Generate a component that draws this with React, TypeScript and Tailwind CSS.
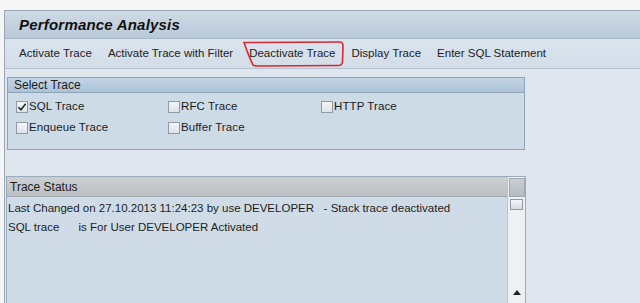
import { ReactNode } from 'react';

const font = { fontFamily: '"Liberation Sans", Arial, sans-serif' };

const CheckItem = ({ label, checked }: { label: string; checked?: boolean }) => (
  <div className="flex items-center h-[21px]">
    <div className="w-[12px] h-[12px] border border-[#8e9aa6] bg-gradient-to-b from-[#f4f6f8] to-[#dde3e9] flex items-center justify-center mr-[1px]">
      {checked && (
        <svg width="10" height="10" viewBox="0 0 10 10">
          <path d="M1.5 5.2 L4 7.8 L8.6 1.8" fill="none" stroke="#222" strokeWidth="1.5" />
        </svg>
      )}
    </div>
    <span className="text-[11.5px] text-[#1c1c1c] tracking-[0.1px]">{label}</span>
  </div>
);

const ToolItem = ({ children }: { children: ReactNode }) => (
  <span className="text-[11.5px] text-[#222] whitespace-nowrap">{children}</span>
);

export default function App() {
  return (
    <div className="w-[640px] h-[303px] overflow-hidden bg-[#f3f5f6] relative" style={font}>
      <div className="h-[10px] bg-[#f6f7f7]" />
      <div className="ml-[4px] border-l border-t border-[#9aa8b6] bg-[#dfe6ed] h-[293px]">
        {/* title */}
        <div className="h-[28px] bg-gradient-to-b from-[#cfdae5] via-[#c4d2df] to-[#b8c9d9] flex items-center pl-[14px] pt-[1px] border-b border-[#a9b9c9]">
          <span className="text-[15px] font-bold italic text-[#111] tracking-[0.2px]">Performance Analysis</span>
        </div>
        {/* toolbar */}
        <div className="h-[30px] bg-gradient-to-b from-[#dbe4ed] to-[#d2dde8] flex items-center pl-[14px] gap-[16px] border-b border-[#b4c2cf]">
          <ToolItem>Activate Trace</ToolItem>
          <ToolItem>Activate Trace with Filter</ToolItem>
          <ToolItem>Deactivate Trace</ToolItem>
          <ToolItem>Display Trace</ToolItem>
          <ToolItem>Enter SQL Statement</ToolItem>
        </div>
        {/* select trace */}
        <div className="pt-[8px] pl-[2px]">
          <div className="w-[518px] h-[73px] border border-[#8fa3b6] bg-[#cddbe7]">
            <div className="h-[15px] bg-gradient-to-b from-[#c3d5e6] to-[#adc3d8] border-b border-[#8fa3b6] flex items-center pl-[6px]">
              <span className="text-[12px] text-[#1c1c1c]">Select Trace</span>
            </div>
            <div className="grid grid-cols-[152px_153px_160px] pl-[8px] pt-[3px]">
              <CheckItem label="SQL Trace" checked />
              <CheckItem label="RFC Trace" />
              <CheckItem label="HTTP Trace" />
              <CheckItem label="Enqueue Trace" />
              <CheckItem label="Buffer Trace" />
            </div>
          </div>
        </div>
        {/* trace status */}
        <div className="mt-[26px] pl-[1px]">
          <div className="w-[520px] h-[130px] border border-[#9aabbb] bg-[#cfdce8] flex">
            <div className="flex-1 flex flex-col">
              <div className="h-[20px] bg-gradient-to-b from-[#cdd0d3] to-[#bcc0c4] border-b border-[#a0a8b0] flex items-center pl-[3px]">
                <span className="text-[12px] text-[#1c1c1c]">Trace Status</span>
              </div>
              <div className="pl-[1px] pt-[2px] text-[11.5px] text-[#1c1c1c] leading-[19px] whitespace-pre">
                <div>Last Changed on 27.10.2013 11:24:23 by use DEVELOPER   - Stack trace deactivated</div>
                <div>SQL trace      is For User DEVELOPER Activated</div>
              </div>
            </div>
            <div className="w-[18px] border-l border-[#b8c4ce] bg-[#eef1f4] flex flex-col items-center">
              <div className="w-[16px] h-[19px] mt-[1px] bg-gradient-to-b from-[#c9ced3] to-[#b6bcc2] border border-[#a0a8b0]" />
              <div className="w-[13px] h-[11px] mt-[2px] bg-gradient-to-b from-[#f3f5f7] to-[#d6dce2] border border-[#8e9aa6]" />
              <div className="flex-1" />
              <svg width="8" height="5" viewBox="0 0 8 5" className="mb-[10px]">
                <path d="M0 5 L4 0 L8 5 Z" fill="#222" />
              </svg>
            </div>
          </div>
        </div>
      </div>
      {/* hand drawn highlight */}
      <svg className="absolute left-[240px] top-[40px]" width="106" height="30" viewBox="0 0 106 30">
        <path
          d="M4 2.5 L100 2 Q103 2 103 6 L102.5 22 Q102 25.5 98 25.5 L16 26 L13 25 Q9 17 4 2.5 Z"
          fill="none"
          stroke="#d9282f"
          strokeWidth="1.6"
        />
      </svg>
    </div>
  );
}
